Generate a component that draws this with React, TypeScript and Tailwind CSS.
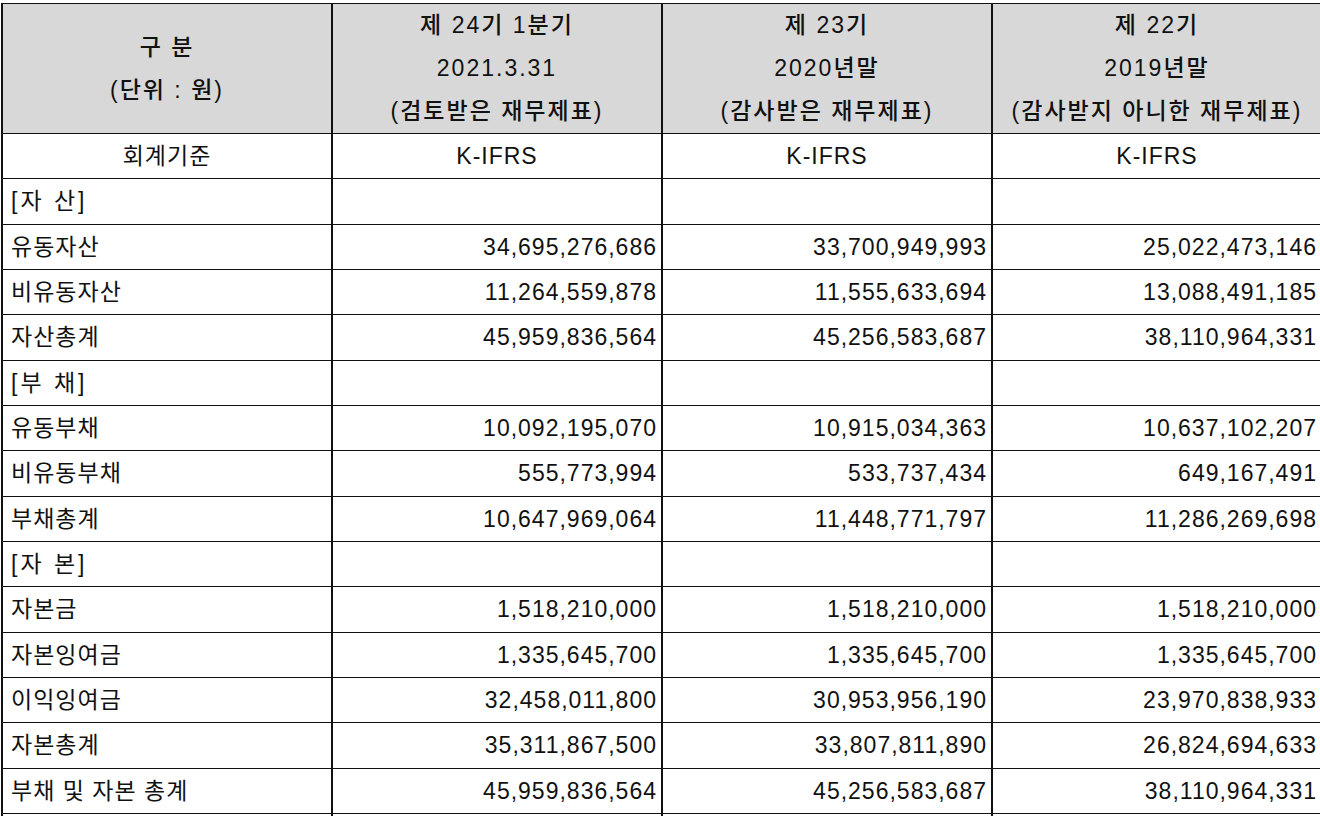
import React from 'react';

type Row = { label: string; center?: boolean; values: string[] };

const rows: Row[] = [
  { label: '회계기준', center: true, values: ['K-IFRS', 'K-IFRS', 'K-IFRS'] },
  { label: '[자 산]', values: ['', '', ''] },
  { label: '유동자산', values: ['34,695,276,686', '33,700,949,993', '25,022,473,146'] },
  { label: '비유동자산', values: ['11,264,559,878', '11,555,633,694', '13,088,491,185'] },
  { label: '자산총계', values: ['45,959,836,564', '45,256,583,687', '38,110,964,331'] },
  { label: '[부 채]', values: ['', '', ''] },
  { label: '유동부채', values: ['10,092,195,070', '10,915,034,363', '10,637,102,207'] },
  { label: '비유동부채', values: ['555,773,994', '533,737,434', '649,167,491'] },
  { label: '부채총계', values: ['10,647,969,064', '11,448,771,797', '11,286,269,698'] },
  { label: '[자 본]', values: ['', '', ''] },
  { label: '자본금', values: ['1,518,210,000', '1,518,210,000', '1,518,210,000'] },
  { label: '자본잉여금', values: ['1,335,645,700', '1,335,645,700', '1,335,645,700'] },
  { label: '이익잉여금', values: ['32,458,011,800', '30,953,956,190', '23,970,838,933'] },
  { label: '자본총계', values: ['35,311,867,500', '33,807,811,890', '26,824,694,633'] },
  { label: '부채 및 자본 총계', values: ['45,959,836,564', '45,256,583,687', '38,110,964,331'] },
  { label: '', values: ['', '', ''] },
];

const periods = [
  ['제 24기 1분기', '2021.3.31', '(검토받은 재무제표)'],
  ['제 23기', '2020년말', '(감사받은 재무제표)'],
  ['제 22기', '2019년말', '(감사받지 아니한 재무제표)'],
];

const cell = 'border-l-2 border-[#111] flex items-center';

export default function App() {
  return (
    <div
      className="w-[1320px] h-[816px] overflow-hidden bg-white text-[#111]"
      style={{ fontFamily: '"Liberation Sans", "Noto Sans CJK KR", sans-serif' }}
    >
      <div className="mt-[3px] ml-[1px] w-[1330px] border-t border-[#111]">
        <div className="grid grid-cols-[330px_330px_330px_330px] h-[130px] bg-[#d8d8d8] border-b border-[#111] text-[23px] font-medium leading-[43px] tracking-[2px]">
          <div className={`${cell} flex-col justify-center text-center`}>
            <div>구 분</div>
            <div>(단위 : 원)</div>
          </div>
          {periods.map((p) => (
            <div key={p[0]} className={`${cell} flex-col justify-center text-center`}>
              {p.map((line) => (
                <div key={line} className="whitespace-nowrap">{line}</div>
              ))}
            </div>
          ))}
        </div>
        {rows.map((r, i) => (
          <div
            key={i}
            className="grid grid-cols-[330px_330px_330px_330px] h-[45.33px] border-b border-[#111] text-[23px] tracking-[1px]"
          >
            <div
              className={`${cell} ${r.center ? 'justify-center' : 'pl-[8px]'} ${
                r.label.startsWith('[') ? 'tracking-[3px]' : ''
              } whitespace-nowrap`}
            >
              {r.label}
            </div>
            {r.values.map((v, j) => (
              <div
                key={j}
                className={`${cell} ${r.center ? 'justify-center' : 'justify-end pr-[4px]'} whitespace-nowrap`}
              >
                {v}
              </div>
            ))}
          </div>
        ))}
      </div>
    </div>
  );
}
